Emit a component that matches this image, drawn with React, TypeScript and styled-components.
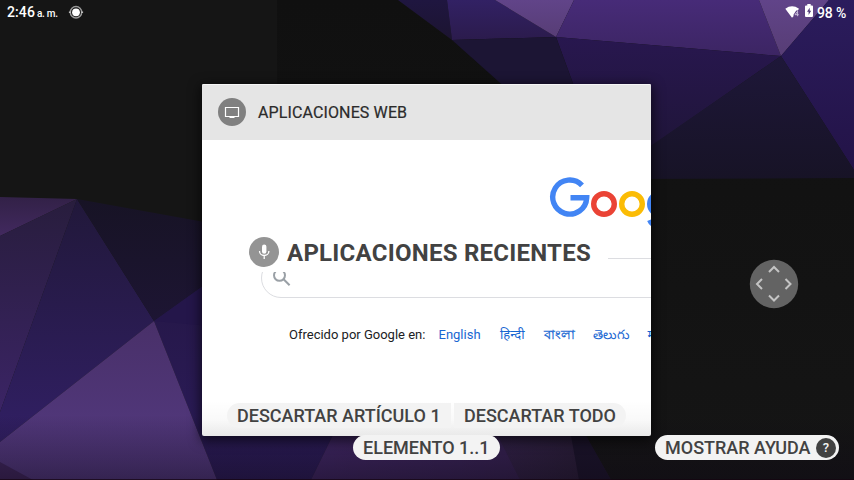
import React from "react";
import styled, { createGlobalStyle } from "styled-components";

const GlobalStyle = createGlobalStyle`
  *, *::before, *::after { box-sizing: border-box; }
  html, body { margin: 0; padding: 0; background: #111; }
  body { font-family: Roboto, "Noto Sans", sans-serif; overflow: hidden; }
  svg { display: block; flex: none; }
`;

const Screen = styled.main`
  position: relative;
  width: 854px;
  height: 480px;
  overflow: hidden;
  display: flex;
  flex-direction: column;
`;

const Backdrop = styled.div`
  position: absolute;
  inset: 0;
`;

const StatusBar = styled.header`
  position: relative;
  height: 24px;
  padding: 0 8px 0 7px;
  display: flex;
  align-items: center;
  color: #fff;
  font-size: 14px;
  line-height: 24px;
  font-weight: 500;
  white-space: nowrap;
`;

const Clock = styled.span`
  width: 61px;
  padding-top: 1px;
  letter-spacing: 0.1px;
  small { font-size: 10px; margin-left: 2px; letter-spacing: -0.25px; }
`;

const StatusIcons = styled.div`
  margin-left: auto;
  display: flex;
  align-items: center;
  gap: 5px;
`;

const BatteryLevel = styled.span`
  margin-left: -1px;
  padding-top: 1px;
  letter-spacing: -0.2px;
`;

const Stage = styled.div`
  position: relative;
  flex: 1;
  padding: 60px 55px 0 202px;
  display: flex;
  align-items: flex-start;
  justify-content: space-between;
`;

const TaskCard = styled.section`
  position: relative;
  width: 449px;
  height: 352px;
  overflow: hidden;
  border-radius: 2px;
  background: #fff;
  box-shadow: 0 3px 12px 2px rgba(0, 0, 0, 0.6);
`;

const CardHeader = styled.div`
  height: 56px;
  padding: 0 16px;
  display: flex;
  align-items: center;
  gap: 12px;
  background: #e5e5e5;
  box-shadow: inset 0 1px #f6f6f6;
  color: #2b2b2b;
  font-size: 16px;
  line-height: 20px;
  letter-spacing: 0.12px;
  white-space: nowrap;
`;

const CardTitle = styled.span`
  padding-top: 1px;
  -webkit-text-stroke: 0.2px #2b2b2b;
`;

const RoundIcon = styled.span<{ $size: number; $color: string }>`
  width: ${(p) => p.$size}px;
  height: ${(p) => p.$size}px;
  flex: none;
  border-radius: 50%;
  background: ${(p) => p.$color};
  display: flex;
  align-items: center;
  justify-content: center;
`;

const WebPage = styled.div`
  height: 296px;
  width: 560px;
  padding: 36px 0 0 59px;
`;

const LogoRow = styled.div`
  padding-left: 287px;
  height: 82px;
`;

const SearchBox = styled.div`
  width: 580px;
  height: 40px;
  border: 1px solid #dcdde1;
  border-radius: 20px;
  padding: 9px 11px;
`;

const Languages = styled.div`
  margin: 28px 0 0 28px;
  display: flex;
  font-size: 13px;
  line-height: 18px;
  color: #202124;
  white-space: nowrap;
`;

const Offered = styled.span`
  width: 149.5px;
`;

const Language = styled.span<{ $width: number; $heavier?: boolean }>`
  width: ${(p) => p.$width}px;
  color: #1967d2;
  -webkit-text-stroke: ${(p) => (p.$heavier ? "0.3px #1967d2" : "0")};
`;

const CardFade = styled.div`
  position: absolute;
  inset: auto 0 0 0;
  height: 36px;
  background: linear-gradient(rgba(0, 0, 0, 0), rgba(0, 0, 0, 0.025) 55%, rgba(0, 0, 0, 0.085));
`;

const RecentsTitle = styled.div`
  position: absolute;
  left: 249px;
  top: 232px;
  height: 40px;
  width: 359px;
  display: flex;
  align-items: center;
  gap: 8px;
  background: #fff;
  color: #424242;
  font-size: 24px;
  line-height: 38px;
  font-weight: 700;
  white-space: nowrap;
`;

const TitleText = styled.span`
  padding-top: 2px;
  letter-spacing: 0.25px;
`;

const ActionRow = styled.div`
  position: absolute;
  left: 227px;
  top: 403px;
  display: flex;
  gap: 3px;
`;

const HintRow = styled.div`
  position: absolute;
  left: 353px;
  right: 15px;
  top: 435px;
  display: flex;
  justify-content: space-between;
`;

const Pill = styled.div<{ $width: number; $radius?: string }>`
  width: ${(p) => p.$width}px;
  height: 25px;
  padding: 0 3px 0 10px;
  display: flex;
  align-items: center;
  justify-content: space-between;
  border-radius: ${(p) => p.$radius ?? "13px"};
  background: #f3f3f3;
  color: #424242;
  font-size: 18px;
  line-height: 25px;
  font-weight: 500;
  white-space: nowrap;
`;

const HelpGlyph = styled.span`
  color: #f3f3f3;
  font-size: 13px;
  line-height: 20px;
  font-weight: 500;
`;

const Dpad = styled.div`
  margin-top: 175px;
  width: 50px;
`;

function Wallpaper() {
  const grad = (id: string, a: string, b: string, x2 = 0, y2 = 1) => (
    <linearGradient id={id} x1="0" y1="0" x2={x2} y2={y2}>
      <stop offset="0" stopColor={a} />
      <stop offset="1" stopColor={b} />
    </linearGradient>
  );
  return (
    <svg width="854" height="480" viewBox="0 0 854 480">
      <defs>
        {grad("slate", "#101010", "#151515")}
        {grad("navy", "#1f1640", "#1c1430")}
        {grad("indigo", "#322164", "#2b1b4c")}
        {grad("lilac", "#614489", "#573d75")}
        {grad("violet", "#472b78", "#3c2563")}
        {grad("deep", "#28174f", "#1f1538")}
        {grad("night", "#1e1739", "#171326")}
        {grad("edge", "#2b1c5d", "#231347")}
        {grad("plum", "#322147", "#42295f")}
        {grad("leftA", "#281d3d", "#3b2465")}
        {grad("leftB", "#21183a", "#311f64")}
        {grad("leftC", "#171325", "#1d1533")}
        {grad("leftD", "#251747", "#2c1c5b")}
        {grad("bright", "#493069", "#543a82")}
        {grad("base", "#452b6c", "#281d34", 1, 0)}
        {grad("fade", "rgba(14,8,20,0)", "rgba(14,8,20,0.45)")}
      </defs>
      <rect width="854" height="480" fill="url(#slate)" />
      <rect width="277" height="230" fill="#151515" />
      <polygon points="398,0 447,0 452,40" fill="url(#navy)" />
      <polygon points="447,0 495,0 556,37 452,40" fill="url(#indigo)" />
      <polygon points="495,0 574,0 556,37" fill="url(#lilac)" />
      <polygon points="574,0 759,0 781,56 556,37" fill="url(#violet)" />
      <polygon points="556,37 781,56 640,154 590,130" fill="url(#deep)" />
      <polygon points="452,40 556,37 590,130 553,130" fill="#1c1534" />
      <polygon points="759,0 829,0 781,56" fill="url(#lilac)" />
      <polygon points="829,0 854,0 854,170 781,56" fill="url(#edge)" />
      <polygon points="781,56 854,170 854,178 620,179 620,167" fill="url(#night)" />
      <polygon points="0,197 77,199 0,236" fill="url(#plum)" />
      <polygon points="0,236 77,199 0,412" fill="url(#leftA)" />
      <polygon points="77,199 154,321 0,442 0,412" fill="url(#leftB)" />
      <polygon points="77,199 210,223 210,281 154,321" fill="url(#leftC)" />
      <polygon points="154,321 210,281 350,400 311,480 217,480" fill="url(#leftD)" />
      <polygon points="154,321 210,326 210,281" fill="#24164a" />
      <polygon points="154,321 217,480 0,480 0,442" fill="url(#bright)" />
      <polygon points="0,462 33,480 0,480" fill="#41275f" />
      <polygon points="350,400 565,400 611,480 311,480" fill="url(#base)" />
      <polygon points="480,400 520,480 311,480 350,400" fill="#3d2461" opacity=".5" />
      <polygon points="570,430 583,430 611,480 579,480" fill="#1b142b" />
      <rect y="415" width="854" height="65" fill="url(#fade)" />
      <rect y="479" width="854" height="1" fill="#16040f" opacity=".7" />
    </svg>
  );
}

function GoogleLogo() {
  return (
    <svg width="140" height="56" viewBox="0 0 140 56" fill="none">
      <path d="M34 9.300A17 17 0 1 0 38.700 21.800H22.500" stroke="#4285f4" strokeWidth="5.400" />
      <circle cx="56" cy="28" r="10.300" stroke="#ea4335" strokeWidth="5.400" />
      <circle cx="84" cy="28" r="10.300" stroke="#fbbc05" strokeWidth="5.400" />
      <circle cx="112" cy="28" r="10.300" stroke="#4285f4" strokeWidth="5.400" />
      <path d="M122 16v25c0 12-17 12-20.500 3" stroke="#4285f4" strokeWidth="5" />
    </svg>
  );
}

export default function App() {
  return (
    <>
      <GlobalStyle />
      <Screen>
        <Backdrop><Wallpaper /></Backdrop>
        <StatusBar>
          <Clock>2:46<small>a. m.</small></Clock>
          <svg width="16" height="16" viewBox="0 0 16 16" fill="none">
            <circle cx="8" cy="8.300" r="5.700" stroke="#999" strokeWidth="1.500" />
            <path d="M.9 8.300h2M13.100 8.300h2" stroke="#bbb" strokeWidth="1.600" />
            <circle cx="8" cy="8.300" r="3.900" fill="#fff" />
          </svg>
          <StatusIcons>
            <svg width="15" height="14" viewBox="0 0 15 14">
              <path d="M.3 3.800Q7-1.100 14 3.800L12.800 5.500h-1.600L8.500 9.700v1.600L7 12.800Z" fill="#fff" />
              <path d="M12.600 11.200V6.300L10 9.700h3.700" fill="none" stroke="#cbbfdb" strokeWidth="1" />
            </svg>
            <svg width="8" height="16" viewBox="0 0 8 16">
              <path d="M2.300 0h3.400v1.500H7q1 0 1 1V12q0 1-1 1H1q-1 0-1-1V2.500q0-1 1-1h1.300Z" fill="#fff" />
              <path d="M4.700 3.700 2 7.700h1.600v3.200L6.200 6.700H4.700Z" fill="#503a78" />
            </svg>
            <BatteryLevel>98 %</BatteryLevel>
          </StatusIcons>
        </StatusBar>
        <Stage>
          <TaskCard>
            <CardHeader>
              <RoundIcon $size={28} $color="#808080">
                <svg width="16" height="14" viewBox="0 0 16 14">
                  <path d="M1.500 2.500h13v9h-13Z" fill="none" stroke="#fff" strokeWidth="1.200" />
                  <path d="M5.500 11.500h5v1.500h-5Z" fill="#fff" />
                </svg>
              </RoundIcon>
              <CardTitle>APLICACIONES WEB</CardTitle>
            </CardHeader>
            <WebPage>
              <LogoRow><GoogleLogo /></LogoRow>
              <SearchBox>
                <svg width="20" height="20" viewBox="0 0 20 20" fill="none" stroke="#9aa0a6" strokeWidth="2">
                  <circle cx="6.500" cy="7.300" r="5.500" />
                  <path d="m10.600 11.300 6 6" />
                </svg>
              </SearchBox>
              <Languages>
                <Offered>Ofrecido por Google en:</Offered>
                <Language $width={61.5}>English</Language>
                <Language $width={43.5}>हिन्दी</Language>
                <Language $width={49} $heavier>বাংলা</Language>
                <Language $width={55}>తెలుగు</Language>
                <Language $width={40}>मराठी</Language>
              </Languages>
            </WebPage>
            <CardFade />
          </TaskCard>
          <Dpad>
            <svg width="50" height="50" viewBox="0 0 50 50" fill="none">
              <circle cx="25" cy="25" r="24.200" fill="#636363" />
              <path d="m20 13 5-5 5 5M20 36.500l5 5 5-5M13 20l-5 5 5 5M36.500 20l5 5-5 5" stroke="#c4c4c4" strokeWidth="2" />
            </svg>
          </Dpad>
        </Stage>
        <RecentsTitle>
          <RoundIcon $size={30} $color="#949494">
            <svg width="14" height="18" viewBox="0 0 14 18" fill="none">
              <rect x="5" y="1.500" width="4.400" height="9.200" rx="2.200" fill="#fff" />
              <path d="M2.500 8c0 6 9.400 6 9.400 0M7.200 12.500V16" stroke="#fff" strokeWidth="1.300" />
            </svg>
          </RoundIcon>
          <TitleText>APLICACIONES RECIENTES</TitleText>
        </RecentsTitle>
        <ActionRow>
          <Pill $width={224} $radius="13px 0 0 13px">DESCARTAR ARTÍCULO 1</Pill>
          <Pill $width={172} $radius="0 13px 13px 0">DESCARTAR TODO</Pill>
        </ActionRow>
        <HintRow>
          <Pill $width={147}>ELEMENTO 1..1</Pill>
          <Pill $width={184}>
            MOSTRAR AYUDA
            <RoundIcon $size={20} $color="#424242"><HelpGlyph>?</HelpGlyph></RoundIcon>
          </Pill>
        </HintRow>
      </Screen>
    </>
  );
}
